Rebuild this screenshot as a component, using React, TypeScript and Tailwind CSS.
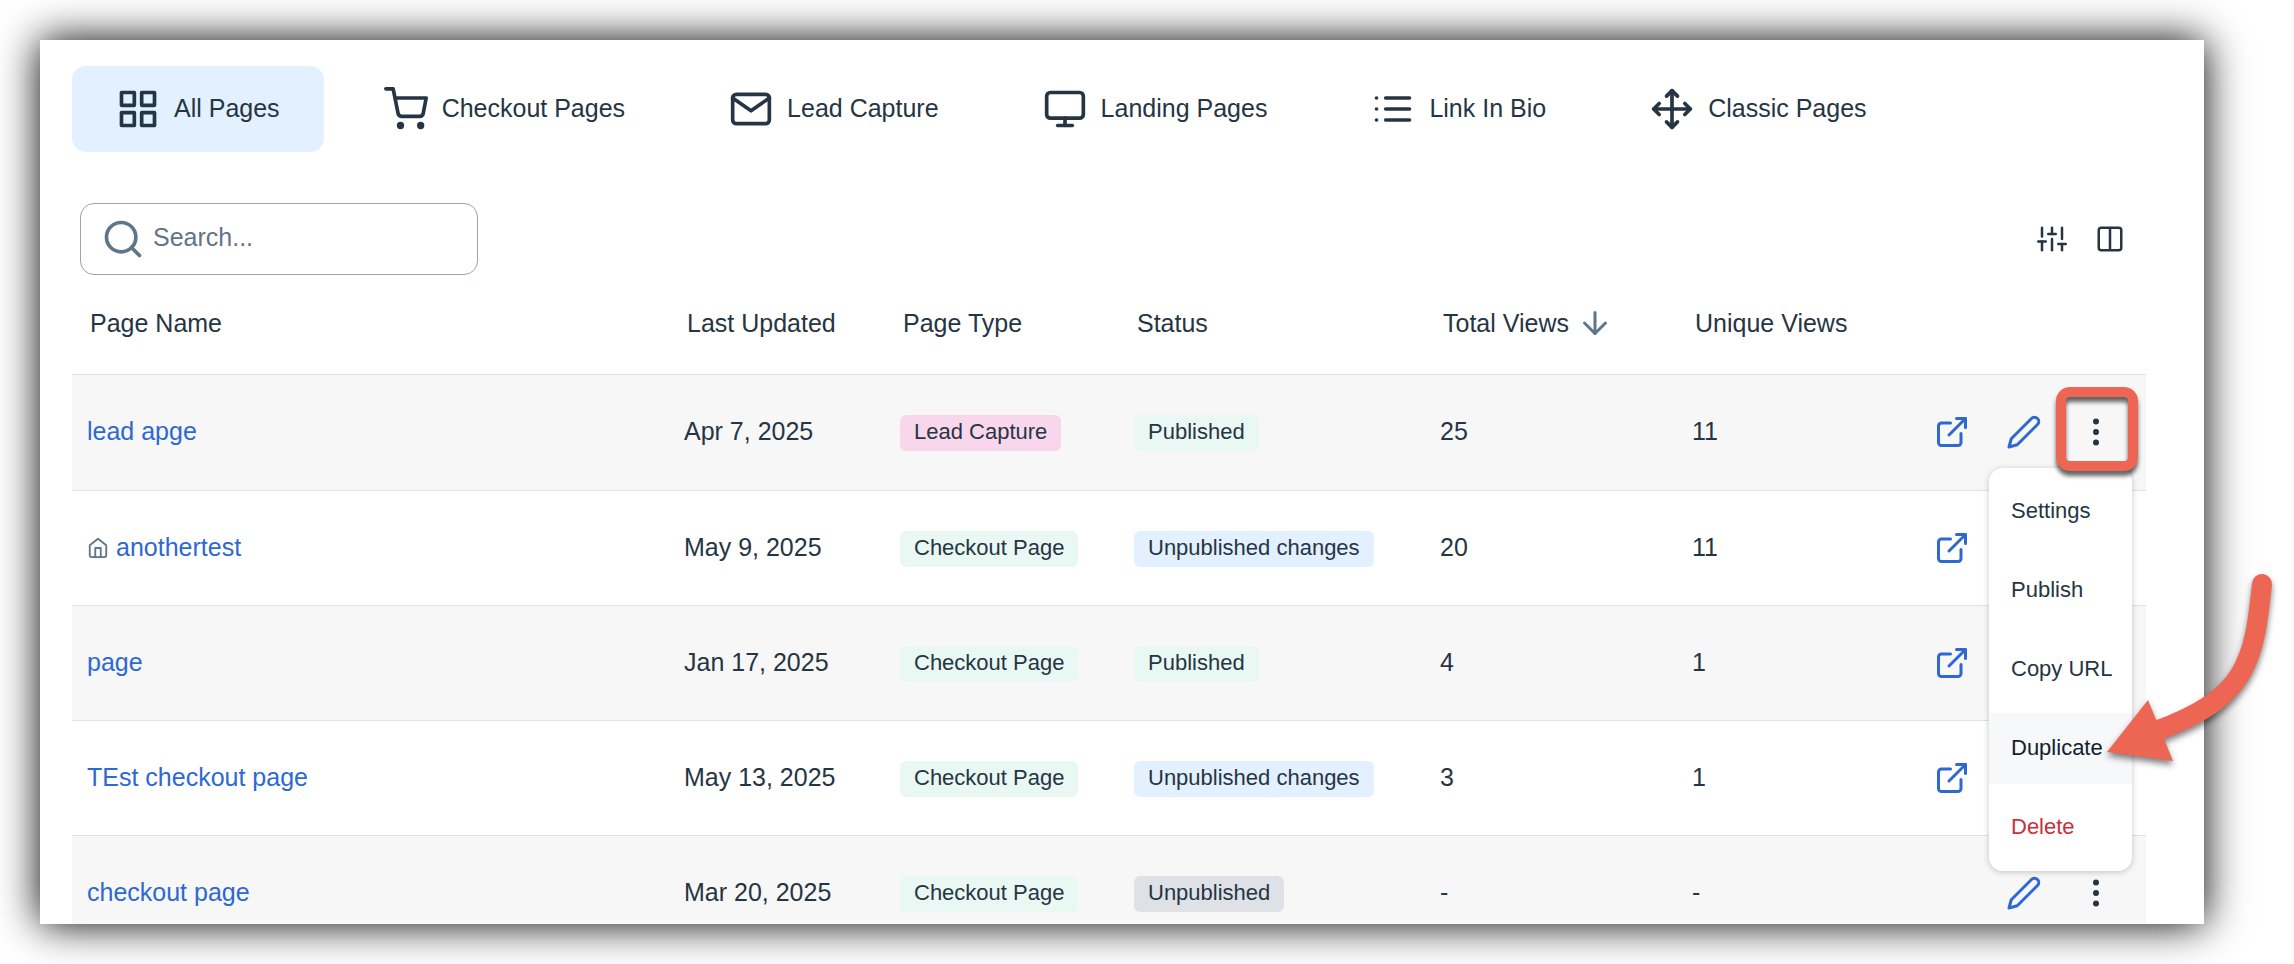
import { useState } from "react";
import type { IconType } from "react-icons";
import {
  FiArrowDown,
  FiColumns,
  FiEdit2,
  FiExternalLink,
  FiGrid,
  FiHome,
  FiList,
  FiMail,
  FiMonitor,
  FiMoreVertical,
  FiMove,
  FiSearch,
  FiShoppingCart,
  FiSliders,
} from "react-icons/fi";

type PageRow = {
  name: string;
  home?: boolean;
  updated: string;
  type: string;
  status: string;
  total: string;
  unique: string;
  live: boolean;
};

const TABS: { label: string; Icon: IconType }[] = [
  { label: "All Pages", Icon: FiGrid },
  { label: "Checkout Pages", Icon: FiShoppingCart },
  { label: "Lead Capture", Icon: FiMail },
  { label: "Landing Pages", Icon: FiMonitor },
  { label: "Link In Bio", Icon: FiList },
  { label: "Classic Pages", Icon: FiMove },
];

const ROWS: PageRow[] = [
  { name: "lead apge", updated: "Apr 7, 2025", type: "Lead Capture", status: "Published", total: "25", unique: "11", live: true },
  { name: "anothertest", home: true, updated: "May 9, 2025", type: "Checkout Page", status: "Unpublished changes", total: "20", unique: "11", live: true },
  { name: "page", updated: "Jan 17, 2025", type: "Checkout Page", status: "Published", total: "4", unique: "1", live: true },
  { name: "TEst checkout page", updated: "May 13, 2025", type: "Checkout Page", status: "Unpublished changes", total: "3", unique: "1", live: true },
  { name: "checkout page", updated: "Mar 20, 2025", type: "Checkout Page", status: "Unpublished", total: "-", unique: "-", live: false },
];

const BADGE_COLORS: Record<string, string> = {
  "Lead Capture": "bg-[#f8d7ec]",
  "Checkout Page": "bg-[#e9f8f3]",
  Published: "bg-[#e9f8f3]",
  "Unpublished changes": "bg-[#e2f0ff]",
  Unpublished: "bg-[#dee2e7]",
};

const MENU_ITEMS = ["Settings", "Publish", "Copy URL", "Duplicate", "Delete"];

function Badge({ label }: { label: string }) {
  return (
    <span
      className={[
        "inline-flex h-9 items-center whitespace-nowrap rounded-md px-[14px] pb-0.5 align-middle text-[22px] leading-none",
        BADGE_COLORS[label],
      ].join(" ")}
    >
      {label}
    </span>
  );
}

function RowMenu() {
  return (
    <div
      role="menu"
      className="absolute top-[54px] -right-[18px] z-10 flex w-[143px] flex-col gap-2 rounded-[14px] bg-white py-2 shadow-[0_1px_6px_rgba(0,0,0,0.22)]"
    >
      {MENU_ITEMS.map((item) => (
        <button
          key={item}
          type="button"
          role="menuitem"
          className={[
            "h-[71px] whitespace-nowrap pb-0.5 pl-[22px] text-left text-[22px]",
            item === "Duplicate" ? "bg-[#f6f8fa] text-[#14202b]" : "",
            item === "Delete" ? "text-[#cb2f3c]" : "",
          ].join(" ")}
        >
          {item}
        </button>
      ))}
    </div>
  );
}

function RowActions({ row, open }: { row: PageRow; open: boolean }) {
  return (
    <div className="flex items-center justify-end gap-9 text-[#2d68d3]">
      {row.live && (
        <a href="#view" aria-label={`Open ${row.name}`}>
          <FiExternalLink size={36} />
        </a>
      )}
      <a href="#edit" aria-label={`Edit ${row.name}`}>
        <FiEdit2 size={36} />
      </a>
      <div className="relative text-[#263543]">
        <button type="button" aria-label={`More actions for ${row.name}`} className="block">
          <FiMoreVertical size={36} />
        </button>
        {open && (
          <>
            <RowMenu />
            <div className="pointer-events-none absolute -top-[27px] -left-[22px] z-20 h-[84px] w-[82px] rounded-[14px] border-10 border-[#ed6553] drop-shadow-[0_5px_2px_rgba(0,0,0,0.6)]" />
          </>
        )}
      </div>
    </div>
  );
}

/* Curved pointer aimed at the Duplicate item */
function Pointer() {
  return (
    <svg
      className="pointer-events-none absolute top-[564px] right-[4px] z-30 drop-shadow-[0_4px_3px_rgba(0,0,0,0.5)]"
      width="190"
      height="210"
      viewBox="0 0 190 210"
      fill="none"
      aria-hidden="true"
    >
      <path d="M162 20C154 96 148 134 56 167" stroke="#ed6553" strokeWidth="20" strokeLinecap="round" />
      <path d="M7 188L48 136L73 197Z" fill="#ed6553" />
    </svg>
  );
}

export default function App() {
  const [activeTab, setActiveTab] = useState("All Pages");
  const [query, setQuery] = useState("");

  return (
    <main className="relative flex h-screen overflow-hidden bg-white py-10 pr-[90px] pl-10 font-['Liberation_Sans',Arial,sans-serif] text-[25px] text-[#263543]">
      <section className="flex-1 overflow-hidden bg-white pt-[26px] pr-[58px] pl-8 shadow-[0_0_40px_#000]">
        <nav className="flex gap-4">
          {TABS.map(({ label, Icon }) => (
            <button
              key={label}
              type="button"
              onClick={() => setActiveTab(label)}
              className={[
                "flex h-[86px] items-center gap-[14px] whitespace-nowrap rounded-[14px] px-11",
                activeTab === label ? "bg-[#e2f0ff]" : "",
              ].join(" ")}
            >
              <Icon size={44} />
              {label}
            </button>
          ))}
        </nav>

        <div className="mt-[51px] flex items-center justify-between pr-[21px] pl-2">
          <label className="flex h-[72px] w-[398px] items-center gap-2 rounded-[14px] border border-[#94a5b3] px-5 text-[#5f7589]">
            <FiSearch size={44} className="shrink-0" />
            <input
              type="text"
              aria-label="Search pages"
              placeholder="Search..."
              value={query}
              onChange={(e) => setQuery(e.target.value)}
              className="min-w-0 flex-1 bg-transparent pb-0.5 outline-none placeholder:text-[#5f7589]"
            />
          </label>
          <div className="flex items-center gap-7">
            <button type="button" aria-label="Filters">
              <FiSliders size={30} />
            </button>
            <button type="button" aria-label="Columns">
              <FiColumns size={30} />
            </button>
          </div>
        </div>

        <table className="w-full table-fixed border-collapse text-left">
          <colgroup>
            <col />
            <col className="w-[216px]" />
            <col className="w-[234px]" />
            <col className="w-[306px]" />
            <col className="w-[252px]" />
            <col className="w-[220px]" />
            <col className="w-[249px]" />
          </colgroup>
          <thead>
            <tr className="h-[99px] whitespace-nowrap [&>th]:px-[18px] [&>th]:pb-0.5 [&>th]:font-normal">
              <th>Page Name</th>
              <th>Last Updated</th>
              <th>Page Type</th>
              <th>Status</th>
              <th>
                <button type="button" className="flex items-center gap-2">
                  Total Views
                  <FiArrowDown size={36} className="text-[#5f7589]" />
                </button>
              </th>
              <th>Unique Views</th>
              <th aria-label="Actions" />
            </tr>
          </thead>
          <tbody>
            {ROWS.map((row, i) => (
              <tr
                key={row.name}
                className="h-[115px] whitespace-nowrap border-t border-[#dee2e6] first:h-[116px] odd:bg-[#f7f7f7] [&>td]:px-[15px]"
              >
                <td>
                  <a href="#page" className="flex items-center gap-[7px] text-[#2d68d3]">
                    {row.home && <FiHome size={22} className="text-[#5f7589]" />}
                    {row.name}
                  </a>
                </td>
                <td>{row.updated}</td>
                <td>
                  <Badge label={row.type} />
                </td>
                <td>
                  <Badge label={row.status} />
                </td>
                <td>{row.total}</td>
                <td>{row.unique}</td>
                <td>
                  <div className="pr-[17px]">
                    <RowActions row={row} open={i === 0} />
                  </div>
                </td>
              </tr>
            ))}
          </tbody>
        </table>
      </section>
      <Pointer />
    </main>
  );
}
